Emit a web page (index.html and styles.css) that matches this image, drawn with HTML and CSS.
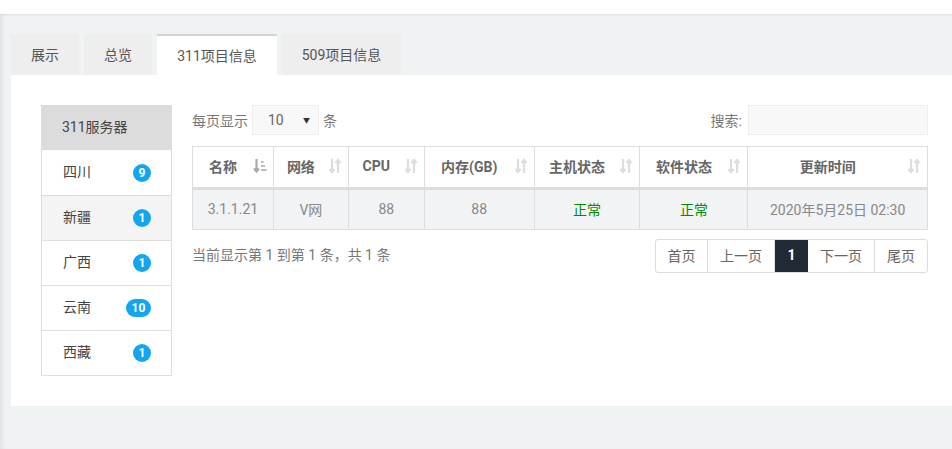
FILE: index.html
```html
<!DOCTYPE html>
<html lang="zh-CN">
<head>
<meta charset="utf-8">
<title>311项目信息</title>
<link rel="stylesheet" href="styles.css">
</head>
<body>
<div class="topbar"></div>
<div class="main">
  <ul class="tabs">
    <li class="tab t1">展示</li>
    <li class="tab t2">总览</li>
    <li class="tab t3 active">311项目信息</li>
    <li class="tab t4">509项目信息</li>
  </ul>
  <div class="panel">
    <div class="list">
      <div class="list-head">311服务器</div>
      <div class="list-item"><span>四川</span><span class="badge">9</span></div>
      <div class="list-item alt"><span>新疆</span><span class="badge">1</span></div>
      <div class="list-item"><span>广西</span><span class="badge">1</span></div>
      <div class="list-item"><span>云南</span><span class="badge wide">10</span></div>
      <div class="list-item"><span>西藏</span><span class="badge">1</span></div>
    </div>
    <div class="content">
      <div class="controls">
        <div class="length">每页显示 <span class="select"><span>10</span><span class="caret">▼</span></span> 条</div>
        <div class="search">搜索: <span class="input"></span></div>
      </div>
      <table class="grid">
        <thead>
          <tr>
            <th class="c1">名称<svg class="sort" viewBox="0 0 14 16"><path d="M3.5 1v12M1 10.5L3.5 13.5 6 10.5" stroke="#aaa" stroke-width="2.2" fill="none"/><rect x="8" y="3" width="2.5" height="2" fill="#bbb"/><rect x="8" y="7" width="4" height="2" fill="#bbb"/><rect x="8" y="11" width="5.5" height="2" fill="#bbb"/></svg></th>
            <th class="c2">网络<svg class="sort" viewBox="0 0 14 16"><path d="M4 1v13M1.5 11L4 14 6.5 11M10 15V2M7.5 5L10 2 12.5 5" stroke="#ddd" stroke-width="2.2" fill="none"/></svg></th>
            <th class="c3">CPU<svg class="sort" viewBox="0 0 14 16"><path d="M4 1v13M1.5 11L4 14 6.5 11M10 15V2M7.5 5L10 2 12.5 5" stroke="#ddd" stroke-width="2.2" fill="none"/></svg></th>
            <th class="c4">内存(GB)<svg class="sort" viewBox="0 0 14 16"><path d="M4 1v13M1.5 11L4 14 6.5 11M10 15V2M7.5 5L10 2 12.5 5" stroke="#ddd" stroke-width="2.2" fill="none"/></svg></th>
            <th class="c5">主机状态<svg class="sort" viewBox="0 0 14 16"><path d="M4 1v13M1.5 11L4 14 6.5 11M10 15V2M7.5 5L10 2 12.5 5" stroke="#ddd" stroke-width="2.2" fill="none"/></svg></th>
            <th class="c6">软件状态<svg class="sort" viewBox="0 0 14 16"><path d="M4 1v13M1.5 11L4 14 6.5 11M10 15V2M7.5 5L10 2 12.5 5" stroke="#ddd" stroke-width="2.2" fill="none"/></svg></th>
            <th class="c7">更新时间<svg class="sort" viewBox="0 0 14 16"><path d="M4 1v13M1.5 11L4 14 6.5 11M10 15V2M7.5 5L10 2 12.5 5" stroke="#ddd" stroke-width="2.2" fill="none"/></svg></th>
          </tr>
        </thead>
        <tbody>
          <tr>
            <td>3.1.1.21</td>
            <td>V网</td>
            <td>88</td>
            <td>88</td>
            <td class="ok">正常</td>
            <td class="ok">正常</td>
            <td>2020年5月25日 02:30</td>
          </tr>
        </tbody>
      </table>
      <div class="footer">
        <div class="info">当前显示第 1 到第 1 条，共 1 条</div>
        <ul class="pager">
          <li class="pg w52">首页</li>
          <li class="pg w67">上一页</li>
          <li class="pg cur">1</li>
          <li class="pg w67">下一页</li>
          <li class="pg w52 last">尾页</li>
        </ul>
      </div>
    </div>
  </div>
</div>
</body>
</html>
```
FILE: styles.css
```css
* { box-sizing: border-box; }
html, body { margin: 0; padding: 0; }
body {
  background: #eff3f4;
  font-family: Roboto, "Noto Sans CJK SC", sans-serif;
  font-size: 14px;
  color: #555;
  width: 952px;
  height: 449px;
  overflow: hidden;
  box-shadow: inset 5px 0 5px -3px rgba(0,0,0,0.08);
}
.topbar {
  height: 14px;
  background: #fff;
  box-shadow: 0 1px 2px rgba(0,0,0,0.08);
}
.main { padding: 20px 0 0 11px; }
.tabs {
  list-style: none;
  margin: 0;
  padding: 0;
  display: flex;
  gap: 5px;
  height: 41px;
}
.tab {
  background: #eeeeee;
  height: 41px;
  display: flex;
  align-items: center;
  justify-content: center;
  color: #555;
  padding-bottom: 1px;
}
.t1, .t2 { width: 68px; }
.t3 { width: 120px; }
.t4 { width: 119px; }
.tab.active { background: #fff; border-top: 2px solid #d3d3d3; padding-bottom: 2px; }
.panel {
  background: #fff;
  height: 331px;
  padding: 30px 24px 0 30px;
  display: flex;
  gap: 20px;
}
.list {
  width: 131px;
  border: 1px solid #ddd;
  align-self: flex-start;
}
.list-head {
  background: #dcdcdc;
  height: 45px;
  display: flex;
  align-items: center;
  padding: 0 0 3px 21px;
  margin: -1px -1px 0 -1px;
  color: #444;
}
.list-item {
  height: 45px;
  border-top: 1px solid #ddd;
  display: flex;
  align-items: center;
  justify-content: space-between;
  padding: 0 20px 0 21px;
  color: #444;
}
.list-item > span:first-child { position: relative; top: -2px; }
.list-item:nth-child(2) { border-top: none; }
.list-item.alt { background: #f4f4f4; }
.badge {
  min-width: 18px;
  height: 18px;
  border-radius: 9px;
  background: #11a6ee;
  color: #fff;
  font-weight: bold;
  font-size: 12px;
  display: flex;
  align-items: center;
  justify-content: center;
  padding: 0 4px;
  line-height: 1;
}
.badge.wide { min-width: 25px; }
.content { flex: 1; }
.controls {
  display: flex;
  justify-content: space-between;
  align-items: center;
  height: 30px;
  color: #777;
}
.length { display: flex; align-items: center; gap: 4px; }
.select {
  display: inline-flex;
  align-items: center;
  justify-content: space-between;
  width: 67px;
  height: 30px;
  background: #f8f8f8;
  border: 1px solid #eee;
  padding: 0 8px 0 15px;
  color: #666;
}
.caret { font-size: 7px; color: #333; }
.search { display: flex; align-items: center; gap: 6px; }
.input {
  display: inline-block;
  width: 180px;
  height: 30px;
  background: #f8f8f8;
  border: 1px solid #eee;
}
.grid {
  margin-top: 11px;
  width: 736px;
  border-collapse: collapse;
  border: 1px solid #ddd;
}
.grid th {
  height: 42px;
  font-weight: bold;
  color: #666;
  border: 1px solid #ddd;
  border-bottom: 3px solid #ddd;
  position: relative;
  padding: 0 26px 2px 6px;
  text-align: center;
}
.grid td {
  height: 41px;
  background: #f2f3f5;
  border: 1px solid #ddd;
  text-align: center;
  color: #888;
  padding-bottom: 2px;
}
.grid td.ok { color: #008a00; }
.sort {
  position: absolute;
  right: 6px;
  top: 11px;
  width: 14px;
  height: 16px;
}
.c1 { width: 81px; }
.c2 { width: 75px; }
.c3 { width: 76px; }
.c4 { width: 110px; }
.c5 { width: 106px; }
.c6 { width: 108px; }
.c7 { width: 180px; }
.footer {
  display: flex;
  justify-content: space-between;
  align-items: flex-start;
  margin-top: 9px;
}
.info { color: #777; padding-top: 5px; }
.pager {
  list-style: none;
  margin: 0;
  padding: 0;
  display: flex;
  border: 1px solid #ddd;
  border-radius: 3px;
  height: 34px;
  overflow: hidden;
}
.pg {
  height: 32px;
  display: flex;
  align-items: center;
  justify-content: center;
  border-right: 1px solid #ddd;
  color: #666;
  padding-bottom: 2px;
}
.pg.last { border-right: none; }
.w52 { width: 52px; }
.w67 { width: 67px; }
.pg.cur { width: 33px; background: #1f2a35; color: #fff; font-weight: bold; border-right: none; }
```
